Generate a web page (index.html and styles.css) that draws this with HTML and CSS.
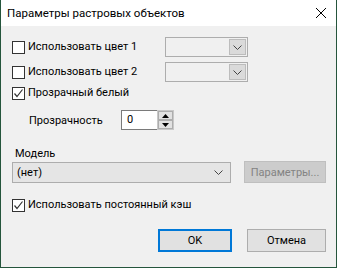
FILE: index.html
```html
<!DOCTYPE html>
<html lang="ru">
<head>
  <meta charset="UTF-8" />
  <title>Параметры растровых объектов</title>
  <link rel="stylesheet" href="styles.css">
</head>
<body>
  <div class="window">
    <div class="titlebar">
      <span class="title">Параметры растровых объектов</span>
      <svg class="close" width="12" height="12" viewBox="0 0 12 12">
        <path d="M1 1 L11 11 M11 1 L1 11" stroke="#000" stroke-width="1" fill="none"/>
      </svg>
    </div>
    <div class="content">
      <div class="row row-color">
        <label class="check"><span class="box"></span>Использовать цвет 1</label>
        <div class="combo combo-small"><span class="combo-btn"><svg width="9" height="5" viewBox="0 0 9 5"><path d="M0.5 0.5 L4.5 4.5 L8.5 0.5" stroke="#444" fill="none"/></svg></span></div>
      </div>
      <div class="row row-color second">
        <label class="check"><span class="box"></span>Использовать цвет 2</label>
        <div class="combo combo-small"><span class="combo-btn"><svg width="9" height="5" viewBox="0 0 9 5"><path d="M0.5 0.5 L4.5 4.5 L8.5 0.5" stroke="#444" fill="none"/></svg></span></div>
      </div>
      <div class="row row-white">
        <label class="check"><span class="box checked"><svg width="11" height="11" viewBox="0 0 11 11"><path d="M1.5 5.5 L4 8.5 L9.5 1.5" stroke="#333" stroke-width="1.2" fill="none"/></svg></span>Прозрачный белый</label>
      </div>
      <div class="row row-spin">
        <span class="spin-label">Прозрачность</span>
        <div class="spin">
          <span class="spin-input">0</span>
          <span class="spin-btns">
            <span class="spin-btn"><svg width="7" height="4" viewBox="0 0 7 4"><path d="M0 4 L3.5 0 L7 4 Z" fill="#000"/></svg></span>
            <span class="spin-btn"><svg width="7" height="4" viewBox="0 0 7 4"><path d="M0 0 L3.5 4 L7 0 Z" fill="#000"/></svg></span>
          </span>
        </div>
      </div>
      <div class="model-label">Модель</div>
      <div class="row row-model">
        <div class="combo combo-model">
          <span class="combo-text">(нет)</span>
          <svg width="9" height="5" viewBox="0 0 9 5"><path d="M0.5 0.5 L4.5 4.5 L8.5 0.5" stroke="#444" fill="none"/></svg>
        </div>
        <button class="btn btn-disabled" disabled>Параметры...</button>
      </div>
      <div class="row row-cache">
        <label class="check"><span class="box checked"><svg width="11" height="11" viewBox="0 0 11 11"><path d="M1.5 5.5 L4 8.5 L9.5 1.5" stroke="#333" stroke-width="1.2" fill="none"/></svg></span>Использовать постоянный кэш</label>
      </div>
      <div class="row row-buttons">
        <button class="btn btn-default">OK</button>
        <button class="btn">Отмена</button>
      </div>
    </div>
  </div>
</body>
</html>
```

FILE: styles.css
```css
* {
  box-sizing: border-box;
}
body {
  margin: 0;
  background-color: #1f5b3d;
  font-family: Roboto, "Noto Sans", sans-serif;
  font-size: 11px;
  color: #000;
}
.window {
  width: 337px;
  height: 268px;
  background-color: #f0f0f0;
  border-left: 1px solid #25553c;
  border-right: 1px solid #25553c;
  border-bottom: 1px solid #25553c;
}
.titlebar {
  height: 26px;
  background-color: #fff;
  display: flex;
  align-items: center;
  justify-content: space-between;
  padding: 0 9px 0 6px;
}
.title {
  font-size: 11.5px;
  line-height: 16px;
}
.close {
  display: block;
}
.content {
  padding: 0 10px 0 11px;
}
.row {
  display: flex;
  align-items: center;
}
.row-color {
  margin-top: 11px;
  height: 20px;
}
.row-color.second {
  margin-top: 5px;
}
.row-color .check {
  width: 153px;
}
.row-white {
  margin-top: 3px;
  height: 16px;
}
.check {
  display: flex;
  align-items: center;
  line-height: 14px;
  white-space: nowrap;
}
.box {
  width: 13px;
  height: 13px;
  border: 1px solid #333;
  background-color: #fff;
  margin-right: 3px;
  display: flex;
  align-items: center;
  justify-content: center;
}
.box svg {
  display: block;
}
.combo {
  border: 1px solid #adadad;
  display: flex;
  align-items: center;
}
.combo-small {
  width: 83px;
  height: 20px;
  justify-content: flex-end;
  padding-right: 1px;
}
.combo-btn {
  width: 17px;
  height: 16px;
  background-color: #dadada;
  border: 1px solid #bcbcbc;
  display: flex;
  align-items: center;
  justify-content: center;
}
.row-spin {
  margin-top: 9px;
  height: 20px;
  padding-left: 17px;
}
.spin-label {
  width: 92px;
}
.spin {
  display: flex;
  height: 20px;
}
.spin-input {
  width: 36px;
  height: 20px;
  background-color: #fff;
  border: 1px solid #7a7a7a;
  border-right: none;
  padding: 2px 0 0 5px;
  line-height: 14px;
}
.spin-btns {
  width: 17px;
  display: flex;
  flex-direction: column;
  border: 1px solid #c8c8c8;
  background-color: #f0f0f0;
}
.spin-btn {
  flex: 1;
  display: flex;
  align-items: center;
  justify-content: center;
  background-color: #e1e1e1;
  border: 1px solid #adadad;
}
.model-label {
  margin-top: 17px;
  height: 14px;
  line-height: 14px;
  padding-left: 3px;
}
.row-model {
  margin-top: 0;
  height: 22px;
  align-items: flex-start;
}
.combo-model {
  margin-top: 1px;
  width: 219px;
  height: 21px;
  background-color: #e5e5e5;
  justify-content: space-between;
  padding: 0 7px 0 4px;
}
.combo-model svg {
  display: block;
}
.btn {
  font-family: inherit;
  font-size: 11px;
  color: #000;
  background-color: #e1e1e1;
  border: 1px solid #adadad;
  padding: 0;
  height: 23px;
  width: 79px;
}
.btn-disabled {
  margin-left: 13px;
  width: 82px;
  height: 22px;
  background-color: #cccccc;
  border-color: #bfbfbf;
  color: #838383;
}
.row-cache {
  margin-top: 14px;
  height: 16px;
}
.row-buttons {
  margin-top: 16px;
  justify-content: flex-end;
  gap: 15px;
  padding-right: 0;
}
.btn-default {
  width: 74px;
  border: 2px solid #0078d7;
}
```
